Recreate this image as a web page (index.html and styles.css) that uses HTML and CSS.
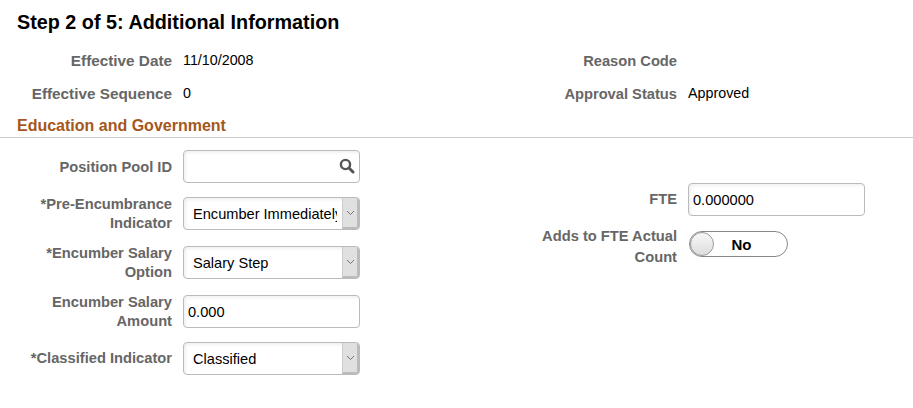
FILE: index.html
```html
<!DOCTYPE html>
<html lang="en">

<head>
    <meta charset="UTF-8">
    <meta name="viewport" content="width=device-width, initial-scale=1.0">
    <title>Additional Information</title>
    <link rel="stylesheet" href="styles.css">
</head>

<body>
    <h1 class="page-title">Step 2 of 5: Additional Information</h1>

    <div class="columns summary">
        <div class="column">
            <div class="field summary-field">
                <span class="label label-wide">Effective Date</span>
                <span class="value">11/10/2008</span>
            </div>
            <div class="field summary-field">
                <span class="label label-wide">Effective Sequence</span>
                <span class="value">0</span>
            </div>
        </div>
        <div class="column">
            <div class="field summary-field">
                <span class="label">Reason Code</span>
                <span class="value"></span>
            </div>
            <div class="field summary-field">
                <span class="label">Approval Status</span>
                <span class="value">Approved</span>
            </div>
        </div>
    </div>

    <h2 class="section-title">Education and Government</h2>

    <div class="columns">
        <div class="column form-column">
            <div class="field search-field">
                <label class="label">Position Pool ID</label>
                <div class="input-box search-box">
                    <input type="text" class="text-input">
                    <svg class="search-icon" width="16" height="16" viewBox="0 0 16 16">
                        <circle cx="6.5" cy="6.5" r="4.6" fill="none" stroke="#555" stroke-width="2.4" />
                        <path d="M10 10l4 4" stroke="#555" stroke-width="3" stroke-linecap="round" />
                    </svg>
                </div>
            </div>
            <div class="field">
                <label class="label">*Pre-Encumbrance Indicator</label>
                <div class="input-box select-box">
                    <select class="select-input">
                        <option>Encumber Immediately</option>
                    </select>
                    <span class="select-arrow">
                        <svg width="9" height="6" viewBox="0 0 9 6">
                            <path d="M1 1l3.5 3.5L8 1" fill="none" stroke="#777" stroke-width="1" />
                        </svg>
                    </span>
                </div>
            </div>
            <div class="field field-tall">
                <label class="label">*Encumber Salary Option</label>
                <div class="input-box select-box">
                    <select class="select-input">
                        <option>Salary Step</option>
                    </select>
                    <span class="select-arrow">
                        <svg width="9" height="6" viewBox="0 0 9 6">
                            <path d="M1 1l3.5 3.5L8 1" fill="none" stroke="#777" stroke-width="1" />
                        </svg>
                    </span>
                </div>
            </div>
            <div class="field field-tall">
                <label class="label">Encumber Salary Amount</label>
                <div class="input-box">
                    <input type="text" class="text-input" value="0.000">
                </div>
            </div>
            <div class="field">
                <label class="label">*Classified Indicator</label>
                <div class="input-box select-box">
                    <select class="select-input">
                        <option>Classified</option>
                    </select>
                    <span class="select-arrow">
                        <svg width="9" height="6" viewBox="0 0 9 6">
                            <path d="M1 1l3.5 3.5L8 1" fill="none" stroke="#777" stroke-width="1" />
                        </svg>
                    </span>
                </div>
            </div>
        </div>

        <div class="column right-form">
            <div class="field">
                <label class="label">FTE</label>
                <div class="input-box">
                    <input type="text" class="text-input" value="0.000000">
                </div>
            </div>
            <div class="field toggle-field">
                <label class="label">Adds to FTE Actual Count</label>
                <div class="toggle">
                    <span class="toggle-knob"></span>
                    <span class="toggle-text">No</span>
                </div>
            </div>
        </div>
    </div>
</body>

</html>
```

FILE: styles.css
```css
body {
    font-family: "Liberation Sans", Arial, sans-serif;
    font-size: 14.3px;
    color: #000;
    background-color: #fff;
    margin: 0;
}

.page-title {
    font-size: 19.8px;
    line-height: 22px;
    font-weight: bold;
    margin: 0;
    padding: 11px 0 0 17px;
}

.columns {
    display: grid;
    grid-template-columns: 505px 1fr;
}

.summary {
    margin-top: 11px;
}

.column {
    display: flex;
    flex-direction: column;
}

.field {
    display: grid;
    grid-template-columns: 172px 177px;
    grid-auto-rows: 33px;
    column-gap: 11px;
    align-items: center;
}

.field-tall {
    margin-top: 2px;
}

.summary-field {
    height: 33px;
}

.label {
    position: relative;
    font-size: 14.7px;
    font-weight: bold;
    color: #666;
    text-align: right;
    line-height: 19px;
}

.summary-field .label,
.search-field .label {
    top: 1px;
}

.summary-field .label-wide {
    top: 0;
    font-size: 15.3px;
}

.value {
    position: relative;
    top: -1px;
}

.section-title {
    font-size: 16px;
    line-height: 20px;
    font-weight: bold;
    color: #a5571b;
    margin: 6px 0 0;
    padding: 0 0 1px 17px;
    border-bottom: 1px solid #ccc;
}

.form-column {
    padding-top: 12px;
    row-gap: 14px;
}

.right-form {
    padding-top: 45px;
    row-gap: 15px;
}

.input-box {
    display: flex;
    height: 33px;
    box-sizing: border-box;
    border: 1px solid #bbb;
    border-radius: 4px;
    background-color: #fff;
    box-shadow: inset 2px 2px 3px rgba(0, 0, 0, 0.06);
    overflow: hidden;
}

.search-box {
    align-items: center;
}

.text-input {
    flex: 1;
    min-width: 0;
    border: none;
    outline: none;
    background: transparent;
    padding: 0 0 0 4px;
    font-family: inherit;
    font-size: 14.6px;
    color: #000;
}

.search-icon {
    flex: none;
    margin-right: 4px;
    margin-top: -2px;
}

.select-input {
    flex: 1;
    min-width: 0;
    appearance: none;
    border: none;
    outline: none;
    background: transparent;
    padding: 0 5px 0 9px;
    font-family: inherit;
    font-size: 14.6px;
    color: #000;
}

.select-arrow {
    flex: none;
    display: flex;
    align-items: center;
    justify-content: center;
    width: 17px;
    background-color: #e0e0e0;
    border-left: 1px solid #ccc;
    border-right: 2px solid #bbb;
    border-bottom: 2px solid #bbb;
    box-sizing: border-box;
}

.toggle-field {
    grid-template-columns: 172px 100px;
    grid-auto-rows: 26px;
}

.toggle-field .label {
    top: 3px;
    line-height: 21px;
}

.toggle {
    display: flex;
    align-items: center;
    height: 26px;
    width: 99px;
    margin-left: 1px;
    box-sizing: border-box;
    border: 1px solid #888;
    border-radius: 13px;
    background-color: #fff;
}

.toggle-knob {
    flex: none;
    width: 24px;
    height: 24px;
    box-sizing: border-box;
    border: 1px solid #999;
    border-radius: 50%;
    background: linear-gradient(#f8f8f8, #ddd);
}

.toggle-text {
    flex: 1;
    padding-right: 18px;
    text-align: center;
    font-size: 15px;
    font-weight: bold;
}
```
